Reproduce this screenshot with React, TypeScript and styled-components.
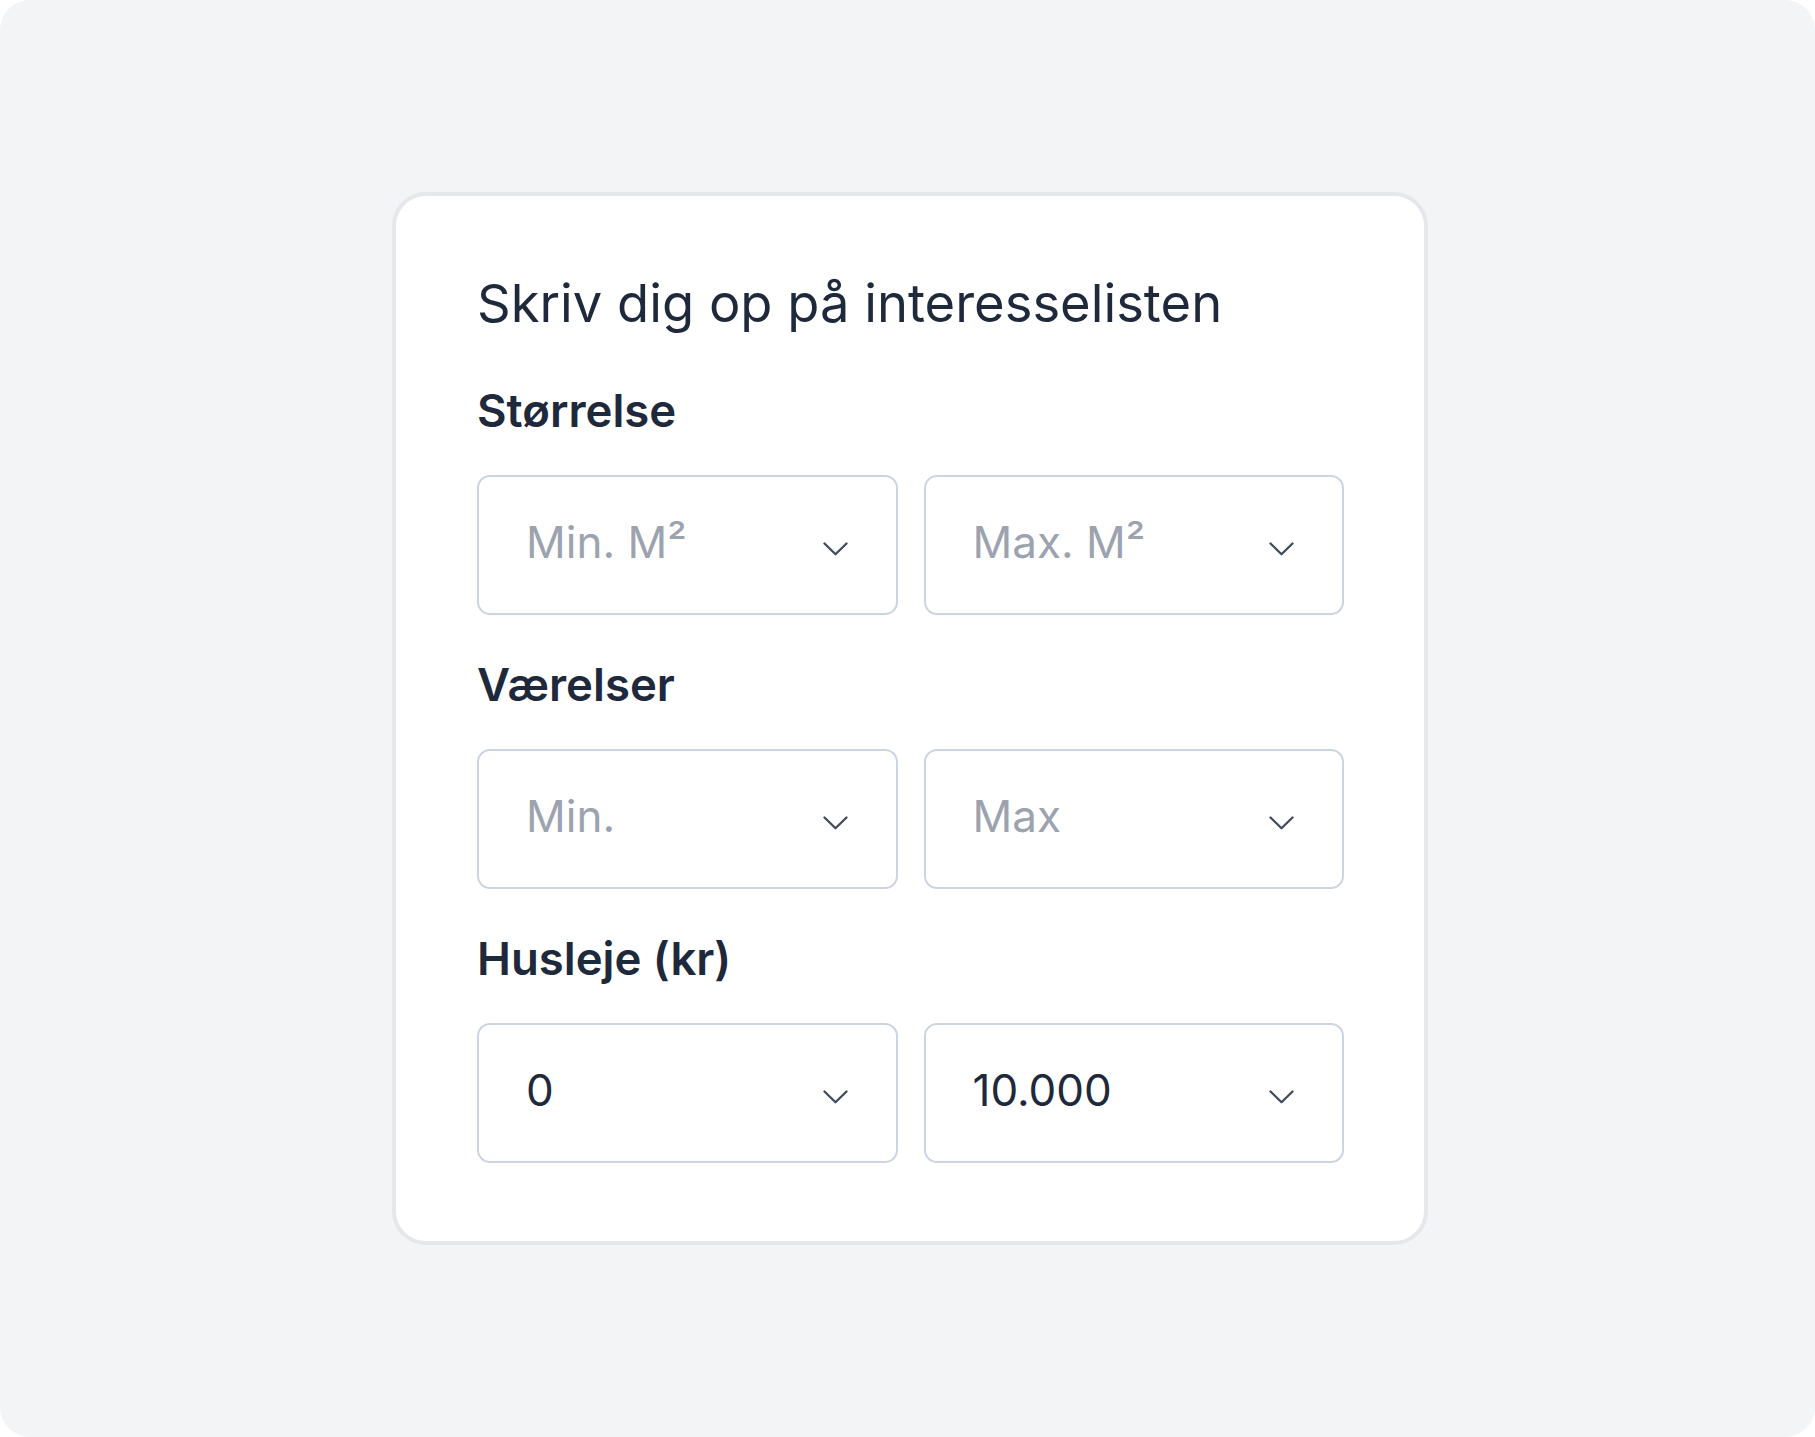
import styled, { createGlobalStyle } from "styled-components";

const GlobalStyle = createGlobalStyle`
  * {
    box-sizing: border-box;
  }

  body {
    margin: 0;
    background-color: #ffffff;
    font-family: Inter, "Noto Sans", sans-serif;
  }
`;

interface ISelect {
  value: string;
  placeholder?: boolean;
}

interface ISection {
  label: string;
  selects: ISelect[];
}

const sections: ISection[] = [
  {
    label: "Størrelse",
    selects: [
      { value: "Min. M²", placeholder: true },
      { value: "Max. M²", placeholder: true },
    ],
  },
  {
    label: "Værelser",
    selects: [
      { value: "Min.", placeholder: true },
      { value: "Max", placeholder: true },
    ],
  },
  {
    label: "Husleje (kr)",
    selects: [{ value: "0" }, { value: "10.000" }],
  },
];

function Chevron() {
  return (
    <svg width="25" height="14" viewBox="0 0 25 14" fill="none">
      <polyline
        points="1.5,1.5 12.5,12.2 23.5,1.5"
        stroke="#3f4b5e"
        strokeWidth="2.3"
        strokeLinecap="round"
        strokeLinejoin="round"
      />
    </svg>
  );
}

export default function App() {
  return (
    <>
      <GlobalStyle />
      <Page>
        <Card>
          <Title>Skriv dig op på interesselisten</Title>
          {sections.map((section) => (
            <Section key={section.label}>
              <Label>{section.label}</Label>
              <Row>
                {section.selects.map((select) => (
                  <SelectBox key={select.value} type="button">
                    <Value $placeholder={select.placeholder}>
                      {select.value}
                    </Value>
                    <IconWrap>
                      <Chevron />
                    </IconWrap>
                  </SelectBox>
                ))}
              </Row>
            </Section>
          ))}
        </Card>
      </Page>
    </>
  );
}

const Page = styled.div`
  width: 100%;
  height: 100vh;
  background-color: #f3f4f6;
  border-radius: 30px;
  display: flex;
  align-items: center;
  justify-content: center;
`;

const Card = styled.div`
  width: 1036px;
  margin-left: 5px;
  background-color: #ffffff;
  border: 4px solid #e5e7eb;
  border-radius: 34px;
  padding: 75px 80px 78px 81px;
  display: flex;
  flex-direction: column;
`;

const Title = styled.h1`
  margin: 0 0 49px;
  font-size: 52.5px;
  line-height: 64px;
  font-weight: 400;
  color: #1e293b;
`;

const Section = styled.div`
  display: flex;
  flex-direction: column;
  gap: 37px;

  & + & {
    margin-top: 43px;
  }
`;

const Label = styled.div`
  font-size: 45.5px;
  line-height: 54px;
  font-weight: 600;
  color: #1e293b;
`;

const Row = styled.div`
  display: grid;
  grid-template-columns: 1fr 1fr;
  gap: 26px;
`;

const SelectBox = styled.button`
  height: 140px;
  display: flex;
  align-items: center;
  justify-content: space-between;
  padding: 0 48px 0 47px;
  background-color: #ffffff;
  border: 2px solid #cbd5e1;
  border-radius: 13px;
  font-family: inherit;
  cursor: pointer;
  text-align: left;
`;

const Value = styled.span<{ $placeholder?: boolean }>`
  font-size: 44px;
  line-height: 56px;
  font-weight: 400;
  padding-bottom: 6px;
  color: ${({ $placeholder }) => ($placeholder ? "#9ca3af" : "#1e293b")};
`;

const IconWrap = styled.span`
  display: flex;
  margin-top: 7px;
`;
